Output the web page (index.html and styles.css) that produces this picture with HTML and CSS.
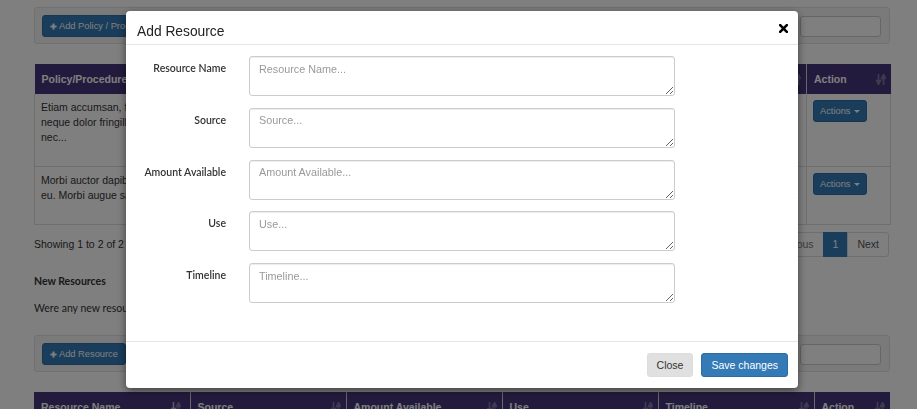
FILE: index.html
```html
<!DOCTYPE html>
<html lang="en">
<head>
<meta charset="utf-8">
<title>Add Resource</title>
<link rel="stylesheet" href="styles.css">
</head>
<body>
<div class="page">
  <div class="well">
    <button class="btn btn-primary btn-sm"><svg class="plus" viewBox="0 0 8 8" width="7" height="7"><path d="M4 0.5V7.5M0.5 4H7.5" stroke="#fff" stroke-width="2.4"/></svg>Add Policy / Procedure</button>
    <input class="search" type="text">
  </div>

  <table class="grid grid-policy">
    <colgroup><col class="c-pol"><col class="c-desc"><col class="c-act1"></colgroup>
    <thead>
      <tr>
        <th>Policy/Procedure<svg class="sort" viewBox="0 0 10 11" width="10" height="11"><path d="M2.5 0V7M0.5 6.5H4.5L2.5 10.5Z M7.5 11V4M5.5 4.5H9.5L7.5 0.5Z" stroke="#7d76a0" stroke-width="1.6" fill="#7d76a0"/></svg></th>
        <th>Description<svg class="sort" viewBox="0 0 10 11" width="10" height="11"><path d="M2.5 0V7M0.5 6.5H4.5L2.5 10.5Z M7.5 11V4M5.5 4.5H9.5L7.5 0.5Z" stroke="#7d76a0" stroke-width="1.6" fill="#7d76a0"/></svg></th>
        <th>Action<svg class="sort" viewBox="0 0 10 11" width="10" height="11"><path d="M2.5 0V7M0.5 6.5H4.5L2.5 10.5Z M7.5 11V4M5.5 4.5H9.5L7.5 0.5Z" stroke="#7d76a0" stroke-width="1.6" fill="#7d76a0"/></svg></th>
      </tr>
    </thead>
    <tbody>
      <tr>
        <td>Etiam accumsan, felis nec ultrices<br>neque dolor fringilla ligula, sit amet<br>nec...</td>
        <td>Vestibulum ante ipsum primis in faucibus orci luctus et ultrices posuere cubilia curae; donec velit neque, auctor sit amet aliquam vel, ullamcorper sit amet ligula. Curabitur arcu erat, accumsan id imperdiet et, porttitor at sem. Pellentesque in ipsum id orci porta dapibus nulla porttitor.</td>
        <td><button class="btn btn-primary btn-sm btn-actions">Actions<span class="caret"></span></button></td>
      </tr>
      <tr>
        <td>Morbi auctor dapibus lorem, vitae<br>eu. Morbi augue sapien, tempor...</td>
        <td>Nulla quis lorem ut libero malesuada feugiat. Vivamus magna justo, lacinia eget consectetur sed, convallis at tellus. Proin eget tortor risus, curabitur non nulla sit amet nisl tempus convallis quis ac lectus.</td>
        <td><button class="btn btn-primary btn-sm btn-actions">Actions<span class="caret"></span></button></td>
      </tr>
    </tbody>
  </table>

  <div class="tfoot">
    <div class="info">Showing 1 to 2 of 2 entries</div>
    <ul class="pager">
      <li>Previous</li>
      <li class="active">1</li>
      <li>Next</li>
    </ul>
  </div>

  <h5 class="section-title">New Resources</h5>
  <p class="section-text">Were any new resources used to support this work during the reporting period?</p>

  <div class="well">
    <button class="btn btn-primary btn-sm"><svg class="plus" viewBox="0 0 8 8" width="7" height="7"><path d="M4 0.5V7.5M0.5 4H7.5" stroke="#fff" stroke-width="2.4"/></svg>Add Resource</button>
    <input class="search" type="text">
  </div>

  <table class="grid grid-res">
    <colgroup><col class="c-res"><col class="c-res"><col class="c-res"><col class="c-res"><col class="c-res"><col class="c-act2"></colgroup>
    <thead>
      <tr>
        <th>Resource Name<svg class="sort asc" viewBox="0 0 10 11" width="10" height="11"><path d="M2.5 0V7M0.5 6.5H4.5L2.5 10.5Z" stroke="#b9b4d0" stroke-width="1.6" fill="#b9b4d0"/><path d="M7.5 11V4M5.5 4.5H9.5L7.5 0.5Z" stroke="#7d76a0" stroke-width="1.6" fill="#7d76a0"/></svg></th>
        <th>Source<svg class="sort" viewBox="0 0 10 11" width="10" height="11"><path d="M2.5 0V7M0.5 6.5H4.5L2.5 10.5Z M7.5 11V4M5.5 4.5H9.5L7.5 0.5Z" stroke="#7d76a0" stroke-width="1.6" fill="#7d76a0"/></svg></th>
        <th>Amount Available<svg class="sort" viewBox="0 0 10 11" width="10" height="11"><path d="M2.5 0V7M0.5 6.5H4.5L2.5 10.5Z M7.5 11V4M5.5 4.5H9.5L7.5 0.5Z" stroke="#7d76a0" stroke-width="1.6" fill="#7d76a0"/></svg></th>
        <th>Use<svg class="sort" viewBox="0 0 10 11" width="10" height="11"><path d="M2.5 0V7M0.5 6.5H4.5L2.5 10.5Z M7.5 11V4M5.5 4.5H9.5L7.5 0.5Z" stroke="#7d76a0" stroke-width="1.6" fill="#7d76a0"/></svg></th>
        <th>Timeline<svg class="sort" viewBox="0 0 10 11" width="10" height="11"><path d="M2.5 0V7M0.5 6.5H4.5L2.5 10.5Z M7.5 11V4M5.5 4.5H9.5L7.5 0.5Z" stroke="#7d76a0" stroke-width="1.6" fill="#7d76a0"/></svg></th>
        <th>Action<svg class="sort" viewBox="0 0 10 11" width="10" height="11"><path d="M2.5 0V7M0.5 6.5H4.5L2.5 10.5Z M7.5 11V4M5.5 4.5H9.5L7.5 0.5Z" stroke="#7d76a0" stroke-width="1.6" fill="#7d76a0"/></svg></th>
      </tr>
    </thead>
  </table>
</div>

<div class="backdrop"></div>

<div class="modal">
  <div class="modal-header">
    <h4 class="modal-title">Add Resource</h4>
    <button class="close" aria-label="Close"><svg viewBox="0 0 9 9" width="9" height="9"><path d="M1.2 1.2L7.8 7.8M7.8 1.2L1.2 7.8" stroke="#000" stroke-width="2.6" stroke-linecap="square"/></svg></button>
  </div>
  <form class="modal-body">
    <label class="lbl" for="f1">Resource Name</label>
    <textarea id="f1" class="ta" placeholder="Resource Name..."></textarea>
    <label class="lbl" for="f2">Source</label>
    <textarea id="f2" class="ta" placeholder="Source..."></textarea>
    <label class="lbl" for="f3">Amount Available</label>
    <textarea id="f3" class="ta" placeholder="Amount Available..."></textarea>
    <label class="lbl" for="f4">Use</label>
    <textarea id="f4" class="ta" placeholder="Use..."></textarea>
    <label class="lbl" for="f5">Timeline</label>
    <textarea id="f5" class="ta" placeholder="Timeline..."></textarea>
  </form>
  <div class="modal-footer">
    <button class="btn btn-default">Close</button>
    <button class="btn btn-primary">Save changes</button>
  </div>
</div>
</body>
</html>
```
FILE: styles.css
```css
* { box-sizing: border-box; }
html, body { margin: 0; padding: 0; }
body {
  font-family: "Liberation Sans", Arial, sans-serif;
  font-size: 10.5px;
  line-height: 15px;
  color: #333;
  background: #fff;
  width: 917px;
  height: 409px;
  overflow: hidden;
}
.page { padding: 7px 27px 0 34px; }

.well {
  display: flex;
  align-items: center;
  justify-content: space-between;
  background: #f5f5f5;
  border: 1px solid #e3e3e3;
  border-radius: 3px;
  padding: 7px 8px 6px 7px;
}
.btn {
  font-family: "Liberation Sans", Arial, sans-serif;
  font-size: 10.5px;
  line-height: 15px;
  height: 22px;
  padding: 0 8px;
  border-radius: 3px;
  border: 1px solid transparent;
  display: inline-flex;
  align-items: center;
  cursor: pointer;
}
.btn-sm { font-size: 9.3px; padding: 0 7px; }
.btn-primary { background: #337ab7; border-color: #2e6da4; color: #fff; }
.btn-default { background: #e0e0e0; border-color: #dcdcdc; color: #333; }
.plus { margin-right: 2px; }
.search {
  width: 81px;
  height: 21px;
  border: 1px solid #ccc;
  border-radius: 3px;
  background: #fff;
}

.grid {
  width: 856px;
  border-collapse: collapse;
  table-layout: fixed;
  margin-top: 20px;
}
.grid th {
  background: #46367a;
  color: #fff;
  font-weight: bold;
  text-align: left;
  height: 30px;
  padding: 0 7px;
  position: relative;
  border-left: 1px solid #cfcfd8;
  white-space: nowrap;
  overflow: hidden;
}
.grid th:first-child { border-left: 0; }
.grid td {
  padding: 6px 6px;
  vertical-align: top;
  border: 1px solid #ddd;
  border-top: 0;
}
.c-pol { width: 386px; }
.c-desc { width: 386px; }
.c-act1 { width: 84px; }
.c-res { width: 156px; }
.c-act2 { width: 76px; }

.sort {
  position: absolute;
  right: 5px;
  top: 10px;
}
.sort.asc { right: 9px; }

.btn-actions { height: 22px; padding: 0 6px; }
.caret {
  display: inline-block;
  width: 0;
  height: 0;
  margin-left: 3px;
  border-left: 3px solid transparent;
  border-right: 3px solid transparent;
  border-top: 3px solid #fff;
}

.tfoot {
  display: flex;
  justify-content: space-between;
  align-items: center;
  margin-top: 7px;
}
.pager {
  display: flex;
  list-style: none;
  margin: 0 1px 0 0;
  padding: 0;
}
.pager li {
  height: 25px;
  padding: 0 9px;
  display: flex;
  align-items: center;
  border: 1px solid #ddd;
  margin-left: -1px;
  color: #337ab7;
  background: #fff;
}
.pager li:first-child { border-radius: 3px 0 0 3px; color: #777; }
.pager li:last-child { border-radius: 0 3px 3px 0; color: #555; }
.pager li.active { background: #337ab7; border-color: #337ab7; color: #fff; }

.section-title {
  font-family: Lato, "Liberation Sans", sans-serif;
  font-weight: bold;
  font-size: 10.5px;
  line-height: 15px;
  margin: 17px 0 12px;
}
.section-text {
  font-family: Lato, "Liberation Sans", sans-serif;
  font-size: 10.5px;
  line-height: 15px;
  margin: 0 0 19px;
}

.backdrop {
  position: fixed;
  inset: 0;
  background: rgba(0, 0, 0, 0.5);
}

.modal {
  position: fixed;
  left: 126px;
  top: 11px;
  width: 672px;
  background: #fff;
  border-radius: 4px;
  box-shadow: 0 3px 9px rgba(0, 0, 0, 0.5);
}
.modal-header {
  display: flex;
  justify-content: space-between;
  align-items: flex-start;
  padding: 13px 10px 4px 11px;
  border-bottom: 1px solid #e5e5e5;
}
.modal-title {
  margin: 0;
  font-family: "Liberation Sans", Arial, sans-serif;
  font-weight: normal;
  font-size: 13.8px;
  line-height: 16px;
  color: #222;
}
.close {
  background: none;
  border: 0;
  padding: 0;
  margin: 0;
  width: 9px;
  height: 9px;
  display: flex;
  cursor: pointer;
}
.modal-body {
  display: grid;
  grid-template-columns: 89px 426px;
  column-gap: 23px;
  row-gap: 11.75px;
  margin: 0;
  padding: 11px 11px 38px;
}
.lbl {
  font-family: Lato, "Liberation Sans", sans-serif;
  font-weight: 600;
  font-size: 10.5px;
  line-height: 15px;
  color: #333;
  text-align: right;
  padding-top: 5px;
  white-space: nowrap;
}
.ta {
  display: block;
  width: 426px;
  height: 40px;
  padding: 4.5px 9px;
  border: 1px solid #ccc;
  border-radius: 3px;
  font-family: "Liberation Sans", Arial, sans-serif;
  font-size: 10.8px;
  line-height: 15px;
  color: #555;
  box-shadow: inset 0 1px 1px rgba(0, 0, 0, 0.075);
  resize: vertical;
}
.ta::placeholder { color: #999; }
.modal-footer {
  display: flex;
  justify-content: flex-end;
  gap: 8px;
  padding: 11px 10px;
  border-top: 1px solid #e5e5e5;
}
.modal-footer .btn { height: 24px; padding: 0 9px; }
```
